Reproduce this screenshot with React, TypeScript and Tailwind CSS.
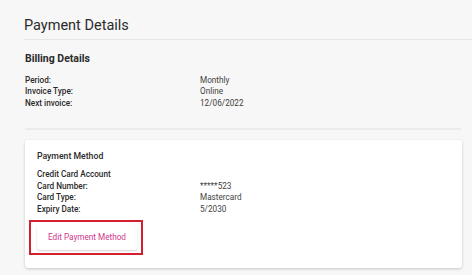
import React from "react";

const font = { fontFamily: "Roboto, 'Liberation Sans', sans-serif" };

function Row({ label, value, w }: { label: string; value?: string; w: string }) {
  return (
    <div className="flex h-[11.5px] items-center">
      <span className={`${w} font-medium text-[#2a2a2a]`}>{label}</span>
      {value && <span className="text-[#3f3f3f]">{value}</span>}
    </div>
  );
}

export default function App() {
  return (
    <div className="h-[275px] w-[474px] bg-white" style={font}>
      <div className="h-[275px] w-[472px] bg-[#f7f7f7] pt-[3px]">
        <div className="ml-6 border-b border-[#e6e6e6] pt-[13px] pb-[4px]">
          <h1 className="text-[14.5px] leading-[19px] text-[#2b2b2b]">Payment Details</h1>
        </div>

        <div className="mx-[25px] w-[436px] border-b-2 border-[#ebebeb] pt-[12px] pb-[19px] text-[8.2px]">
          <h2 className="mb-[9px] text-[10.5px] leading-[13px] font-bold text-[#2a2a2a]">Billing Details</h2>
          <Row w="w-[175px]" label="Period:" value="Monthly" />
          <Row w="w-[175px]" label="Invoice Type:" value="Online" />
          <Row w="w-[175px]" label="Next invoice:" value="12/06/2022" />
        </div>

        <div className="mx-[25px] mt-[10px] h-[128px] w-[437px] rounded-[3px] bg-white px-3 pt-[11px] text-[8.2px] shadow-[0_1px_3px_rgba(0,0,0,0.2)]">
          <h3 className="mb-[7px] text-[8.7px] leading-[11px] font-medium text-[#2a2a2a]">Payment Method</h3>
          <Row w="w-[163px]" label="Credit Card Account" />
          <Row w="w-[163px]" label="Card Number:" value="*****523" />
          <Row w="w-[163px]" label="Card Type:" value="Mastercard" />
          <Row w="w-[163px]" label="Expiry Date:" value="5/2030" />
          <div className="-ml-2 mt-[5px] w-[114px] border-2 border-[#d4202e] px-[6px] pt-[3px] pb-[3px]">
            <button className="flex h-[25px] w-[100px] items-center justify-center rounded-[3px] bg-white text-[8.2px] text-[#d0368a] shadow-[0_1px_2px_rgba(0,0,0,0.18)]">
              Edit Payment Method
            </button>
          </div>
        </div>
      </div>
    </div>
  );
}
